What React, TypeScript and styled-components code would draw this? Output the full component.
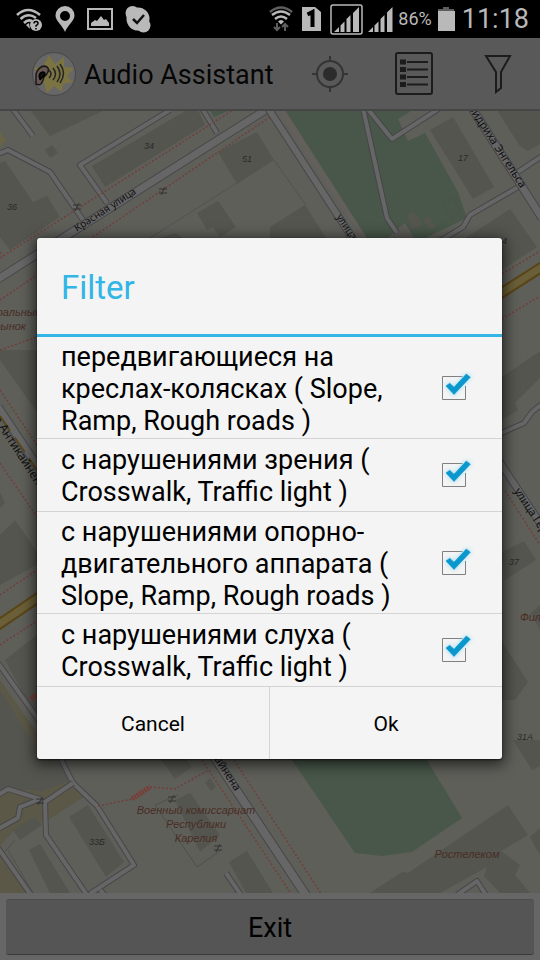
import React, { useState } from "react";
import styled, { createGlobalStyle } from "styled-components";

const GlobalStyle = createGlobalStyle`
  * { box-sizing: border-box; }
  body { margin: 0; background: #000; font-family: Roboto, "Noto Sans", sans-serif; }
  button { font: inherit; border: 0; padding: 0; cursor: pointer; }
`;

const Screen = styled.div`
  display: flex;
  flex-direction: column;
  height: 100vh;
  position: relative;
  overflow: hidden;
`;

const StatusBar = styled.div`
  flex: none;
  height: 38px;
  padding: 0 11px 0 16px;
  display: flex;
  align-items: center;
  justify-content: space-between;
  background: #000;
  color: #b9b9b9;
`;

const StatusGroup = styled.div<{ $gap: number }>`
  display: flex;
  align-items: center;
  gap: ${(p) => p.$gap}px;
  svg { display: block; }
`;

const BatteryText = styled.span`
  font-size: 18px;
  line-height: 38px;
`;

const Clock = styled.span`
  font-size: 27px;
  line-height: 36px;
  padding-left: 2px;
`;

const ActionBar = styled.header`
  flex: none;
  height: 73px;
  padding: 0 22px 0 32px;
  display: flex;
  align-items: center;
  background: #595959;
  border-bottom: 2px solid #464646;
`;

const AppTitle = styled.h1`
  margin: 0 auto 0 8px;
  padding-top: 2px;
  font-size: 27px;
  line-height: 32px;
  font-weight: 400;
  color: #060606;
  white-space: nowrap;
`;

const ActionTools = styled.div`
  display: flex;
  align-items: center;
  gap: 44px;
`;

const ToolButton = styled.button`
  display: block;
  width: 40px;
  height: 48px;
  background: transparent;
  svg { display: block; margin: auto; }
`;

const MapArea = styled.main`
  flex: 1;
  min-height: 0;
  background: #5f5f5a;
  svg { display: block; width: 100%; height: 100%; }
`;

const BottomBar = styled.footer`
  flex: none;
  padding: 6px 6px 5px;
  background: #666;
`;

const ExitButton = styled.button`
  display: block;
  width: 100%;
  height: 56px;
  padding-top: 2px;
  background: #555;
  border-top: 1px solid #4d4d4d;
  border-bottom: 1px solid #393939;
  border-radius: 3px;
  font-size: 27px;
  color: #000;
`;

const Overlay = styled.div`
  position: absolute;
  inset: 38px 0 0;
  padding: 0 38px 2px 37px;
  display: flex;
  align-items: center;
`;

const Dialog = styled.section`
  width: 100%;
  background: #f4f4f4;
  border-radius: 3px;
  box-shadow: 0 3px 14px 3px rgba(0, 0, 0, 0.6), 0 1px 2px rgba(0, 0, 0, 0.6);
  overflow: hidden;
`;

const DialogTitle = styled.h2`
  margin: 0;
  padding: 2px 24px 0;
  font-size: 33px;
  line-height: 96px;
  height: 99px;
  font-weight: 400;
  color: #33b5e5;
  border-bottom: 3px solid #33b5e5;
`;

const OptionRow = styled.label`
  display: flex;
  align-items: center;
  justify-content: space-between;
  min-height: 73px;
  padding: 2px 28px 1px 24px;
  border-bottom: 1px solid #d4d4d4;
`;

const OptionText = styled.span`
  width: 345px;
  padding-top: 2px;
  font-size: 27px;
  line-height: 32px;
  color: #000;
`;

const CheckBox = styled.span`
  position: relative;
  flex: none;
  width: 40px;
  height: 40px;
  svg { display: block; pointer-events: none; position: relative; }
`;

const CheckInput = styled.input`
  appearance: none;
  position: absolute;
  inset: 0;
  margin: 0;
  cursor: pointer;
`;

const TickGlow = styled.path`
  fill: #7fd4f5;
  stroke: #7fd4f5;
  stroke-width: 2;
  opacity: 0.55;
  filter: blur(2px);
`;

const ButtonRow = styled.div`
  display: flex;
`;

const DialogButton = styled.button`
  flex: 1;
  height: 72px;
  padding-top: 2px;
  background: transparent;
  font-size: 21px;
  color: #000;
  & + & { border-left: 1px solid #d4d4d4; }
`;

const OPTIONS = [
  "передвигающиеся на креслах-колясках ( Slope, Ramp, Rough roads )",
  "с нарушениями зрения ( Crosswalk, Traffic light )",
  "с нарушениями опорно-двигательного аппарата ( Slope, Ramp, Rough roads )",
  "с нарушениями слуха ( Crosswalk, Traffic light )",
];

function WifiQuestion() {
  return (
    <svg width="27" height="26" viewBox="0 0 27 26" fill="none" stroke="#b9b9b9" strokeWidth="2.6">
      <path d="M1 9Q12 -1 24 9M4.500 13Q12 6 20 12M8 17Q12 13 16 15" />
      <path d="M10 19l3-2 1 6z" fill="#b9b9b9" stroke="none" />
      <circle cx="20" cy="19" r="6" fill="#b9b9b9" stroke="none" />
      <path d="M18 17.500q0-2 2-2t2 2q0 1-2 2.200v1M20 22v1.500" stroke="#000" strokeWidth="1.500" />
    </svg>
  );
}

function WifiArrows() {
  return (
    <svg width="24" height="26" viewBox="0 0 24 26" fill="none" strokeWidth="2.500">
      <path d="M1 6Q12-3 23 6" stroke="#5e5e5e" />
      <path d="M3 9Q12 2 21 9M6 13Q12 8 18 13" stroke="#b9b9b9" />
      <path d="M9 15.500q3-3 6 0l-3 3z" fill="#b9b9b9" />
      <path d="M8 17v7M5 21l3 3 3-3M16 25v-7M13 21l3-3 3 3" stroke="#5e5e5e" strokeWidth="2" />
    </svg>
  );
}

function SignalBars() {
  return (
    <svg width="25" height="25" viewBox="0 0 25 25" fill="#b9b9b9">
      <path d="M0 25l5-5v5zM6.500 25v-6.500l4-4V25zM12.500 25V12l4-4v17zM19 25V5.500l5.500-5.500v25z" />
    </svg>
  );
}

function Status() {
  return (
    <StatusBar>
      <StatusGroup $gap={12}>
        <WifiQuestion />
        <svg width="20" height="26" viewBox="0 0 20 26">
          <path fillRule="evenodd" fill="#b9b9b9" d="M10 0a9.500 9.500 0 0 1 9.500 9.500C19.500 15 12 20 10 26C8 20 .5 15 .5 9.500A9.500 9.500 0 0 1 10 0zm0 5a5 5 0 1 0 0 10a5 5 0 0 0 0-10z" />
        </svg>
        <svg width="26" height="22" viewBox="0 0 26 22">
          <rect x="1" y="1" width="24" height="20" fill="none" stroke="#b9b9b9" strokeWidth="2" />
          <path d="M4 18v-3l4-3 2 1 4-5 3 4 2-1 3 4v3z" fill="#b9b9b9" />
        </svg>
        <svg width="26" height="27" viewBox="0 0 26 27">
          <circle cx="13" cy="13" r="11.500" fill="#b9b9b9" />
          <circle cx="7.500" cy="7" r="7" fill="#b9b9b9" />
          <circle cx="18.500" cy="19.500" r="7" fill="#b9b9b9" />
          <path d="M8 13l4 4 7-8" fill="none" stroke="#111" strokeWidth="2.500" />
        </svg>
      </StatusGroup>
      <StatusGroup $gap={5}>
        <WifiArrows />
        <svg width="27" height="24" viewBox="0 0 27 24">
          <path d="M4 0h13l6 5v19H4z" fill="#b9b9b9" />
          <path d="M9.500 7.500l5-2.500v15" fill="none" stroke="#000" strokeWidth="4" />
        </svg>
        <svg width="33" height="31" viewBox="0 0 33 31" fill="#b9b9b9">
          <rect x="1" y="1" width="31" height="29" rx="2" fill="none" stroke="#b9b9b9" strokeWidth="1.500" />
          <path d="M4 28l5-5v5zM10.500 28v-6.500l4-4V28zM16.500 28V15l4-4v17zM23 28V9l6-6v25z" />
        </svg>
        <SignalBars />
        <BatteryText>86%</BatteryText>
        <svg width="18" height="24" viewBox="0 0 18 24">
          <path d="M6 0h6v2h5v3H1V2h5z" fill="#5e5e5e" />
          <path d="M1 4h17v20H1z" fill="#b9b9b9" />
        </svg>
        <Clock>11:18</Clock>
      </StatusGroup>
    </StatusBar>
  );
}

function Logo() {
  return (
    <svg width="44" height="46" viewBox="0 0 44 46" fill="none">
      <circle cx="22" cy="23" r="21.500" fill="#676767" stroke="#484848" />
      <path
        d="M17 4l6 9 9-7 0 10 10 1-7 8 6 6-10 2-1 8-8-6-7 7-3-10-9 1 4-9-5-7 9-2z"
        fill="#7b7442"
      />
      <path d="M4 33c6 3 7-4 8-7 4-3 6-8 3-10-5-3-11 3-11 9z" fill="#685753" stroke="#191919" strokeWidth="1.500" />
      <path d="M8 28c-3-7 5-9 5-5 0 3-3 2-5 6z" fill="#111" stroke="#000" strokeWidth="1.500" />
      <path d="M17 19q4 4 0 8M21 17q5 6 0 12M25 15q6 8 0 16M28 13q7 9 0 19" stroke="#242424" strokeWidth="1.500" />
    </svg>
  );
}

type Points = { d: string };
const Casing = ({ d, w = 5 }: Points & { w?: number }) => (
  <g fill="none" strokeLinejoin="round">
    <path d={d} stroke="#46464a" strokeWidth={w + 1} />
    <path d={d} stroke="#666" strokeWidth={w - 1} />
  </g>
);
const Yellow = ({ d }: Points) => (
  <g fill="none">
    <path d={d} stroke="#594415" strokeWidth="11" />
    <path d={d} stroke="#6a5f38" strokeWidth="7" />
  </g>
);

const BUILDINGS = [
  "M30 110L50 136 105 110z",
  "M45 150L52 145 58 153 50 158z",
  "M5 161L33 202 47 196 60 217 10 250 0 237V163z",
  "M92 166L187 110H198L205 125 105 187z",
  "M218 152L257 132 274 160 237 184z",
  "M197 213L218 201 236 227 220 237 213 227 207 230z",
  "M270 227L305 205 326 238H270zM160 238L176 233 182 238z",
  "M430 130L453 117 494 187 473 199z",
  "M497 110L519 145 527 151 540 144V110z",
  "M467 237L510 209 537 247 502 270z",
  "M407 215L414 211 423 225 412 230zM423 220L429 216 436 226 430 230z",
  "M0 350H37V412L0 360zM0 535L15 520 37 552V565L0 585zM0 492L5 503 0 508z",
  "M5 660L37 635V720zM0 690L37 750V790H0z",
  "M502 377L540 351V378L515 403 518 410 502 420z",
  "M502 552L524 541 536 560 505 580zM502 642L528 682 515 700H502z",
  "M531 613L540 605V630z",
  "M0 775L15 758 58 759 70 780 40 792z",
  "M69 817L88 805 124 862 106 877z",
  "M29 850L40 844 70 893H50zM13 830L35 817 42 825 20 840z",
  "M160 758H185L192 767 175 779zM205 783L210 778 216 787 211 791z",
  "M175 800L190 793 220 835 200 852z",
  "M229 862L247 851 273 893H246z",
  "M370 893L402 872 408 873 508 805 528 835 501 851 520 865 515 875 530 893H500L484 876 487 867 440 893z",
  "M513 740L532 770 540 766V740zM540 828L530 837 537 850 540 855z",
];

const ROADS = [
  "M-2 154L8 150 50 172 83 220",
  "M107 203L80 165 170 110",
  "M217 133L202 108",
  "M12 108L33 136",
  "M363 108L387 218 397 233",
  "M367 108L392 139 440 108",
  "M518 172L542 156M520 186L470 215 463 227 440 241",
  "M495 436L524 423 532 412 542 404",
  "M-2 663L40 722M60 757L73 783 97 806 134 865 88 895",
  "M73 783L45 802 46 835 87 895",
  "M-2 829L18 818 20 807 40 799 8 789-2 795",
  "M-2 848L31 895M100 890L105 895",
  "M226 873L241 895",
  "M457 895L477 881 486 895",
];

const DOTS =
  "M0 258L233 110M0 300L270 117M0 252L3 256M0 350L37 337M502 274L540 251M502 319L540 296M0 390L37 445M0 463L37 517M0 595L37 570M0 645L37 621M505 491L540 545M98 806L132 799M150 787L175 789 207 771M200 757L292 895M232 757L322 895";

const NUMBERS: [number, number, string][] = [
  [12, 210, "36"], [149, 149, "34"], [247, 162, "51"], [463, 161, "17"],
  [502, 244, "24"], [514, 565, "37"], [97, 845, "33Б"], [525, 740, "31А"],
];

const FOOTWAYS: [number, number][] = [[77, 207], [163, 191], [40, 801], [172, 799], [218, 848]];

function CityMap() {
  return (
    <svg viewBox="0 111 540 782" preserveAspectRatio="xMidYMid slice" role="img" aria-label="Map">
      <rect y="100" width="540" height="800" fill="#5f5f5a" />
      <path d="M276 110L362 238H370L288 110z" fill="#635f5b" />
      <path d="M0 132L6 140 0 147z" fill="#6b6347" />
      <path d="M0 680L60 765 84 797 45 822 18 826 0 846zM0 850L28 893H0z" fill="#5b5848" />
      <path
        d="M285 110H413L398 119 408 141 425 133 458 192 467 218 425 238H367zM210 110H230L214 117zM290 757L355 853 382 856 412 852 462 818 425 757z"
        fill="#485749"
      />
      <path d="M387 238L405 223 414 238z" fill="#5d5c57" />
      {BUILDINGS.map((d) => <path key={d} d={d} fill="#555550" />)}
      <path d="M443 204L453 198 461 212 451 219zM155 805L178 795M155 805L197 867 220 851" fill="none" stroke="#4d504a" />
      <path d="M150 238L237 183M274 160L306 205M8 850L33 893M15 840L-2 860" fill="none" stroke="#4e4e4b" strokeWidth=".8" />
      {ROADS.map((d) => <Casing key={d} d={d} />)}
      <Casing d="M-2 279L275 104" w={8} />
      <Casing d="M266 105L355 242" w={7} />
      <Casing d="M470 105L542 218" w={8} />
      <Casing d="M-2 407L40 470" w={8} />
      <Casing d="M495 455L542 526" w={7} />
      <Casing d="M213 755L307 897" w={9} />
      <Yellow d="M495 297L545 265" />
      <Yellow d="M-5 627L45 593" />
      <path d="M0 416L37 470" stroke="#5c491b" strokeWidth="2" strokeDasharray="18 8" />
      <path d={DOTS} fill="none" stroke="#713e3b" strokeWidth="1.500" strokeDasharray="2 2" />
      <path d="M132 799L150 787M31 699L40 692" stroke="#7b3c36" strokeWidth="5" strokeDasharray="2 1" />
      <g stroke="#333" strokeWidth="1">
        {FOOTWAYS.map(([x, y]) => (
          <path key={`${x}-${y}`} d={`M${x - 4} ${y - 2}h8m-8 4h8m-6 2l4-8`} />
        ))}
      </g>
      <g fontFamily="'Liberation Sans', sans-serif" fontSize="9" fontStyle="italic" fill="#292929" textAnchor="middle">
        {NUMBERS.map(([x, y, t]) => <text key={t} x={x} y={y}>{t}</text>)}
      </g>
      <g fontFamily="'Noto Sans', sans-serif" fontSize="11" fill="#101010">
        <text transform="translate(77 232) rotate(-33)" fontSize="10">Красная улица</text>
        <text transform="translate(336 217) rotate(57)" fontSize="10">улица Герцена</text>
        <text transform="translate(463 100) rotate(57)">Фридриха Энгельса</text>
        <text transform="translate(-7 419) rotate(57)" fontSize="12">в Антикайнена</text>
        <text transform="translate(514 491) rotate(57)">улица Герцена</text>
        <text transform="translate(197 733) rotate(57)" fontSize="11">Антикайнена</text>
      </g>
      <g fontFamily="'Liberation Sans', sans-serif" fontSize="11" fontStyle="italic" fill="#492d24">
        <text x="41" y="316" textAnchor="end">тральный</text>
        <text x="26" y="330" textAnchor="end">рынок</text>
        <text x="520" y="621">Филармония</text>
        <text x="196" y="814" textAnchor="middle">Военный комиссариат</text>
        <text x="196" y="828" textAnchor="middle">Республики</text>
        <text x="196" y="842" textAnchor="middle">Карелия</text>
        <text x="467" y="858" textAnchor="middle">Ростелеком</text>
      </g>
    </svg>
  );
}

const TICK = "M12 18L15.700 15.300 20 19.300 32.300 6 36.300 9.200 20 26.500z";

function FilterOption({ text }: { text: string }) {
  const [checked, setChecked] = useState(true);
  return (
    <OptionRow>
      <OptionText>{text}</OptionText>
      <CheckBox>
        <CheckInput type="checkbox" checked={checked} onChange={(e) => setChecked(e.target.checked)} />
        <svg width="40" height="40" viewBox="0 0 40 40">
          <path
            d={checked ? "M28.500 8.500H8.500V31.500H31.500V18" : "M8.500 8.500H31.500V31.500H8.500z"}
            fill="none"
            stroke="#808080"
          />
          {checked && (
            <>
              <TickGlow d={TICK} />
              <path d={TICK} fill="#0a97cd" stroke="#0a97cd" strokeWidth=".6" />
            </>
          )}
        </svg>
      </CheckBox>
    </OptionRow>
  );
}

export default function App() {
  return (
    <>
      <GlobalStyle />
      <Screen>
        <Status />
        <ActionBar>
          <Logo />
          <AppTitle>Audio Assistant</AppTitle>
          <ActionTools>
            <ToolButton aria-label="My location">
              <svg width="36" height="36" viewBox="0 0 36 36" fill="none" stroke="#343434" strokeWidth="2">
                <circle cx="18" cy="18" r="13" />
                <circle cx="18" cy="18" r="7" fill="#2c2c2c" stroke="none" />
                <path d="M18 0v5M18 31v5M0 18h5M31 18h5" />
              </svg>
            </ToolButton>
            <ToolButton aria-label="List">
              <svg width="38" height="43" viewBox="0 0 38 43" fill="none" stroke="#1c1c1c" strokeWidth="2">
                <rect x="1" y="1" width="36" height="41" rx="2" />
                <path d="M12 10h21M12 17.500h21M12 25h21M12 32.500h21" />
                <path d="M5 10h6M5 17.500h6M5 25h6M5 32.500h6" strokeWidth="5" />
              </svg>
            </ToolButton>
            <ToolButton aria-label="Filter">
              <svg width="28" height="40" viewBox="0 0 28 40" fill="none" stroke="#1c1c1c" strokeWidth="2">
                <path d="M2 2H26L17 18V34L12 38V18z" />
              </svg>
            </ToolButton>
          </ActionTools>
        </ActionBar>
        <MapArea>
          <CityMap />
        </MapArea>
        <BottomBar>
          <ExitButton>Exit</ExitButton>
        </BottomBar>
        <Overlay>
          <Dialog role="dialog" aria-labelledby="filter-title">
            <DialogTitle id="filter-title">Filter</DialogTitle>
            {OPTIONS.map((text) => <FilterOption key={text} text={text} />)}
            <ButtonRow>
              <DialogButton>Cancel</DialogButton>
              <DialogButton>Ok</DialogButton>
            </ButtonRow>
          </Dialog>
        </Overlay>
      </Screen>
    </>
  );
}
